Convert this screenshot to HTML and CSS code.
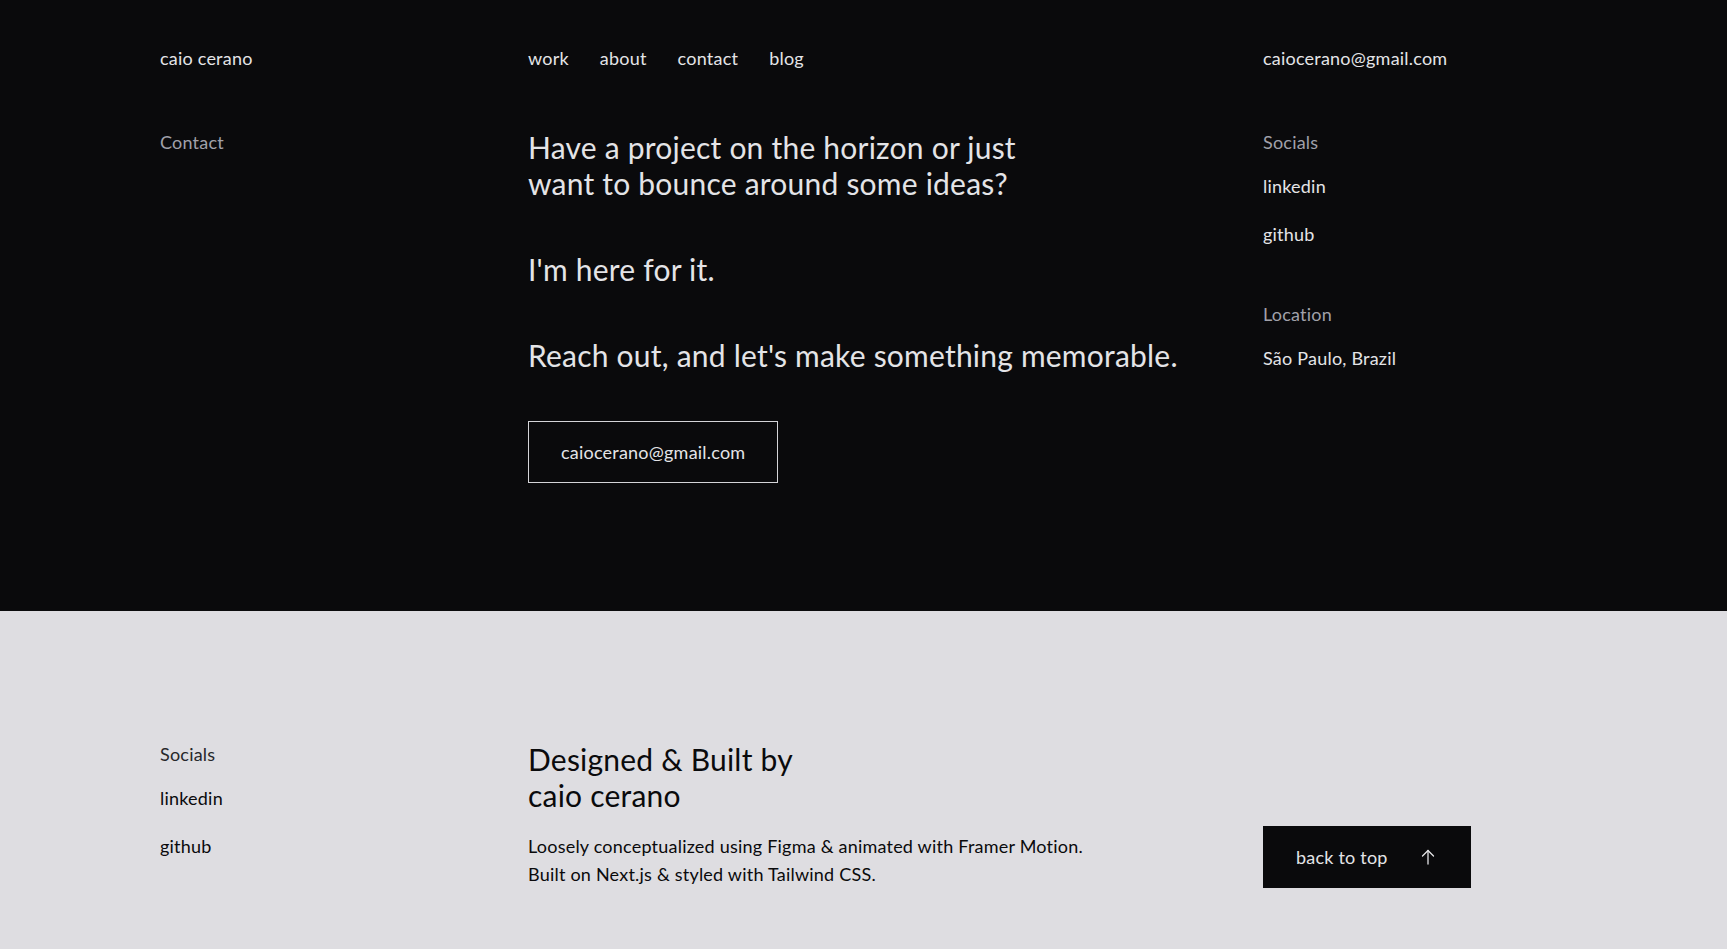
FILE: index.html
```html
<!DOCTYPE html>
<html lang="en">
<head>
<meta charset="utf-8">
<title>Contact — caio cerano</title>
<link rel="stylesheet" href="styles.css">
</head>
<body>
<div class="dark">
  <header class="grid header">
    <a class="brand" href="#">caio cerano</a>
    <nav class="nav">
      <a href="#">work</a>
      <a href="#">about</a>
      <a href="#">contact</a>
      <a href="#">blog</a>
    </nav>
    <a class="mail" href="#">caiocerano@gmail.com</a>
  </header>
  <main class="grid main">
    <div class="label">Contact</div>
    <div class="content">
      <p class="big">Have a project on the horizon or just<br>want to bounce around some ideas?</p>
      <p class="big">I'm here for it.</p>
      <p class="big">Reach out, and let's make something memorable.</p>
      <a class="outline-btn" href="#">caiocerano@gmail.com</a>
    </div>
    <aside class="side">
      <div class="group">
        <div class="label">Socials</div>
        <ul class="links">
          <li><a href="#">linkedin</a></li>
          <li><a href="#">github</a></li>
        </ul>
      </div>
      <div class="group">
        <div class="label">Location</div>
        <ul class="links">
          <li>São Paulo, Brazil</li>
        </ul>
      </div>
    </aside>
  </main>
</div>
<footer class="light">
  <div class="grid foot">
    <div class="group">
      <div class="label">Socials</div>
      <ul class="links">
        <li><a href="#">linkedin</a></li>
        <li><a href="#">github</a></li>
      </ul>
    </div>
    <div class="credits">
      <h2 class="big">Designed &amp; Built by<br>caio cerano</h2>
      <p class="small">Loosely conceptualized using Figma &amp; animated with Framer Motion.<br>Built on Next.js &amp; styled with Tailwind CSS.</p>
    </div>
    <div class="top-wrap">
      <a class="solid-btn" href="#"><span>back to top</span>
        <svg class="arrow" width="16" height="16" viewBox="0 0 16 16" fill="none" stroke="currentColor" stroke-width="1.3" stroke-linecap="round" stroke-linejoin="round"><path d="M8 15V1.5"/><path d="M2.5 7L8 1.5L13.5 7"/></svg>
      </a>
    </div>
  </div>
</footer>
</body>
</html>
```
FILE: styles.css
```css
* { box-sizing: border-box; }
html, body { margin: 0; padding: 0; }
body {
  font-family: "Segoe UI", Lato, "Noto Sans", sans-serif;
  font-size: 18px;
  line-height: 28px;
  letter-spacing: 0.012em;
  background: #0a0a0c;
  color: #e4e4e7;
}
a { color: inherit; text-decoration: none; }
p, h2, ul { margin: 0; padding: 0; }
ul { list-style: none; }

.grid {
  margin-left: 160px;
  width: 1312px;
  display: grid;
  grid-template-columns: 368px 735px 209px;
}

.dark { background: #0a0a0c; color: #e4e4e7; }

.header { padding-top: 44px; }
.nav { display: flex; gap: 31px; }

.main { padding-top: 56px; padding-bottom: 128px; align-items: start; }

.label { color: #a1a1aa; }
.light .label { color: #27272a; }

.content { display: flex; flex-direction: column; align-items: flex-start; gap: 50px; padding-top: 1px; }
.big { font-size: 30px; line-height: 36px; font-weight: 400; }
.content .big { color: #e4e4e7; }

.outline-btn {
  margin-top: -2px;
  display: inline-block;
  padding: 16px 32px;
  border: 1px solid #d4d4d8;
  color: #e4e4e7;
}

.side { display: flex; flex-direction: column; gap: 52px; }
.group .label { margin-bottom: 16px; }
.links { display: flex; flex-direction: column; gap: 20px; }

.light { background: #dedde1; color: #0a0a0c; }
.foot { padding-top: 129px; padding-bottom: 96px; align-items: end; }
.foot .group { align-self: start; }
.credits { align-self: start; padding-top: 1px; }
.credits .big { margin-bottom: 19px; color: #0a0a0c; }
.small { color: #0a0a0c; }

.top-wrap { align-self: end; }
.solid-btn {
  display: flex;
  align-items: center;
  justify-content: space-between;
  white-space: nowrap;
  width: 208px;
  height: 62px;
  padding: 0 35px 0 33px;
  background: #0a0a0c;
  color: #e4e4e7;
}
.arrow { flex: none; }
```
